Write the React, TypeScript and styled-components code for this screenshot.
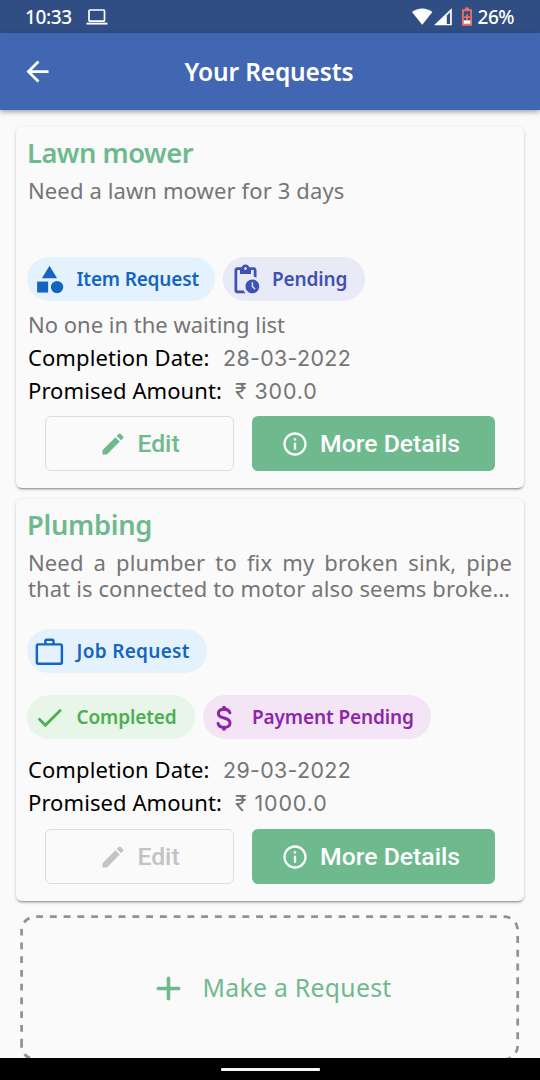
import React from 'react';
import type { ComponentType } from 'react';
import styled, { createGlobalStyle } from 'styled-components';
import {
  MdArrowBack,
  MdCategory,
  MdDone,
  MdEdit,
  MdInfoOutline,
  MdPendingActions,
} from 'react-icons/md';

const green = '#6fb98f';

const GlobalStyle = createGlobalStyle`
  *, *::before, *::after { box-sizing: border-box; }
  body { margin: 0; background: #fafafa; }
  button { font: inherit; margin: 0; }
  svg { display: block; flex: none; }
`;

const Screen = styled.div`
  width: 540px;
  height: 1080px;
  display: flex;
  flex-direction: column;
  overflow: hidden;
  background: #fafafa;
  color: #757575;
  font-family: 'Noto Sans', sans-serif;
`;

const StatusBar = styled.div`
  flex: none;
  height: 33px;
  padding: 0 26px 0 25px;
  display: flex;
  align-items: center;
  background: #304e84;
  color: #fff;
  font-size: 19px;
  font-weight: 500;
  line-height: 33px;
`;

const StatusText = styled.span<{ $spacing: number }>`
  padding-top: 1px;
  letter-spacing: ${(p) => p.$spacing}px;
`;

const StatusIcons = styled.div`
  display: flex;
  align-items: center;
  margin-left: auto;
  margin-right: 6px;
`;

const LaptopSlot = styled.div`
  margin-left: 14px;
`;

const AppBar = styled.header`
  flex: none;
  position: relative;
  height: 77px;
  padding: 0 21px;
  display: grid;
  grid-template-columns: 60px 1fr 60px;
  align-items: center;
  background: #4267b2;
  color: #fff;
  box-shadow: 0 2px 5px rgba(0, 0, 0, 0.35);
`;

const AppTitle = styled.h1`
  margin: 0 2px 0 0;
  text-align: center;
  font-size: 24.5px;
  font-weight: 600;
  line-height: 34px;
  letter-spacing: -0.15px;
`;

const Content = styled.main`
  flex: 1;
  min-height: 0;
  overflow: hidden;
  padding: 17px 16px 0;
  display: flex;
  flex-direction: column;
`;

const Card = styled.article`
  flex: none;
  padding: 9px 12px 17px;
  margin-bottom: 11px;
  border-radius: 6px;
  background: #fafafa;
  box-shadow:
    0 3px 1px -2px rgba(0, 0, 0, 0.2),
    0 2px 2px rgba(0, 0, 0, 0.14),
    0 1px 4px rgba(0, 0, 0, 0.12);
`;

const CardTitle = styled.h2<{ $spacing: number }>`
  margin: 0 0 0 -1px;
  color: ${green};
  font-size: 27.3px;
  font-weight: 600;
  line-height: 34px;
  letter-spacing: ${(p) => p.$spacing}px;
`;

const Description = styled.p`
  margin: 7px 0 28px;
  height: 52px;
  font-size: 22px;
  line-height: 26px;
  letter-spacing: 0.12px;
  text-align: justify;
`;

const Chips = styled.div`
  display: flex;
  margin-left: -1px;
  gap: 7.5px;

  & + & {
    margin-top: 22px;
  }
`;

const tones = {
  blue: { bg: '#e3f2fd', fg: '#1565c0' },
  indigo: { bg: '#e8eaf6', fg: '#3f51b5' },
  green: { bg: '#e8f5e9', fg: '#4caf50' },
  purple: { bg: '#f3e5f5', fg: '#8e24aa' },
};

const ChipBox = styled.div<{ $tone: keyof typeof tones; $width: number }>`
  width: ${(p) => p.$width}px;
  height: 44px;
  padding-left: 6px;
  display: flex;
  align-items: center;
  gap: 10.5px;
  border-radius: 22px;
  background: ${(p) => tones[p.$tone].bg};
  color: ${(p) => tones[p.$tone].fg};
`;

const ChipLabel = styled.span<{ $spacing: number }>`
  font-size: 19px;
  font-weight: 600;
  line-height: 26px;
  letter-spacing: ${(p) => p.$spacing}px;
  white-space: nowrap;
`;

const Info = styled.div<{ $top: number; $bottom: number }>`
  margin: ${(p) => p.$top}px 0 ${(p) => p.$bottom}px;
  font-size: 22px;
  line-height: 33px;
`;

const InfoRow = styled.div`
  display: flex;
  height: 33px;
  align-items: baseline;
  white-space: nowrap;
`;

const InfoLabel = styled.span<{ $width: number }>`
  width: ${(p) => p.$width}px;
  color: #000;
  letter-spacing: 0.08px;
`;

const InfoValue = styled.span<{ $spacing: number }>`
  font-family: Inter, 'Noto Sans', sans-serif;
  font-size: 21.4px;
  letter-spacing: ${(p) => p.$spacing}px;
`;

const Actions = styled.div`
  display: flex;
  gap: 18px;
  padding: 0 17px;
`;

const ActionButton = styled.button<{ $filled?: boolean }>`
  width: ${(p) => (p.$filled ? 243 : 189)}px;
  height: 55px;
  padding: ${(p) => (p.$filled ? '0 6px 0 0' : '0')};
  display: flex;
  align-items: center;
  justify-content: center;
  gap: ${(p) => (p.$filled ? 11 : 10)}px;
  border: ${(p) => (p.$filled ? '0' : '1.4px solid #dcdcdc')};
  border-radius: 6px;
  background: ${(p) => (p.$filled ? green : 'transparent')};
  color: ${(p) => (p.$filled ? '#fff' : green)};
  font-family: Roboto, sans-serif;
  font-size: 24.75px;
  font-weight: 500;

  &:disabled {
    color: #c3c3c3;
  }
`;

const NewRequest = styled.button`
  flex: none;
  position: relative;
  height: 146px;
  margin: 3px 4px 0;
  padding: 0;
  display: flex;
  align-items: center;
  justify-content: center;
  gap: 13px;
  border: 0;
  background: none;
  color: ${green};
  font-size: 24.75px;
  line-height: 34px;
`;

const NewRequestLabel = styled.span`
  letter-spacing: 0.3px;
`;

const DashedOutline = styled.svg`
  position: absolute;
  left: 0;
  top: 0;
  overflow: visible;
`;

const NavigationBar = styled.div`
  flex: none;
  height: 22px;
  display: flex;
  align-items: center;
  justify-content: center;
  background: #000;
`;

const HomeHandle = styled.div`
  width: 99px;
  height: 3px;
  border-radius: 1px;
  background: #f5f5f5;
`;

type IconProps = { size?: number };

function BriefcaseIcon({ size = 24 }: IconProps) {
  return (
    <svg width={size} height={size} viewBox="0 0 24 24" fill="none" stroke="currentColor" strokeWidth="1.75">
      <rect x="2.8" y="6.8" width="18.2" height="14.1" rx="1.1" />
      <path d="M9 6.800V4.400q0-1 1-1h3.900q1 0 1 1V6.800" />
    </svg>
  );
}

function DollarIcon({ size = 24 }: IconProps) {
  return (
    <svg width={size} height={size} viewBox="0 0 24 24" fill="none" stroke="currentColor" strokeLinecap="round">
      <path
        d="M15.200 8.600C14.700 6.900 13 5.900 10.900 5.900 8.500 5.900 6.800 7.200 6.800 9c0 2 1.800 2.700 4.200 3.300 2.600.7 4.300 1.600 4.300 3.700 0 2-1.900 3.200-4.300 3.200-2.400 0-4-1.100-4.400-2.900"
        strokeWidth="2.2"
      />
      <path d="M10.900 4.800v1M10.900 19.300v1" strokeWidth="2.700" />
    </svg>
  );
}

function Chip({ icon: Icon, label, tone, width, spacing = -0.12 }: {
  icon: ComponentType<IconProps>;
  label: string;
  tone: keyof typeof tones;
  width: number;
  spacing?: number;
}) {
  return (
    <ChipBox $tone={tone} $width={width}>
      <Icon size={33} />
      <ChipLabel $spacing={spacing}>{label}</ChipLabel>
    </ChipBox>
  );
}

function Details({ date, amount }: { date: string; amount: string }) {
  return (
    <>
      <InfoRow>
        <InfoLabel $width={195}>Completion Date:</InfoLabel>
        <InfoValue $spacing={0.35}>{date}</InfoValue>
      </InfoRow>
      <InfoRow>
        <InfoLabel $width={207}>Promised Amount:</InfoLabel>
        <InfoValue $spacing={0.9}>₹ {amount}</InfoValue>
      </InfoRow>
    </>
  );
}

function CardActions({ editable }: { editable: boolean }) {
  return (
    <Actions>
      <ActionButton disabled={!editable}>
        <MdEdit size={28} />
        Edit
      </ActionButton>
      <ActionButton $filled>
        <MdInfoOutline size={28} />
        More Details
      </ActionButton>
    </Actions>
  );
}

export default function App() {
  return (
    <Screen>
      <GlobalStyle />
      <StatusBar>
        <StatusText $spacing={-0.4}>10:33</StatusText>
        <LaptopSlot>
          <svg width="22" height="16" viewBox="0 0 22 16" fill="none" stroke="#fff">
            <rect x="3" y="1" width="15.5" height="11.2" rx="1" strokeWidth="1.7" />
            <path d="M0.5 14.6h21" strokeWidth="1.9" />
          </svg>
        </LaptopSlot>
        <StatusIcons>
          <svg width="60" height="20" viewBox="0 0 60 20">
            <path d="M0 5C5.800.2 14.600.2 20.400 5L10.200 17.800z" fill="#fff" />
            <path d="M22 18.200L39.800 1.200v17z" fill="#fff" />
            <path d="M34.800 8.400l3.300-3.200v11.700h-3.300z" fill="#304e84" />
            <path d="M53 .600h4v1.700h3v16.400H50V2.300h3z" fill="#ec7063" />
            <path d="M51.800 4.200h6.400v9.200h-6.400z" fill="#304e84" />
            <path d="M51.800 13.400h6.400v3.300h-6.400z" fill="#fff" />
            <path d="M54.100 7.200h1.900v2h2v1.800h-2v2h-1.900v-2h-2V9.200h2z" fill="#ec7063" />
          </svg>
        </StatusIcons>
        <StatusText $spacing={-0.5}>26%</StatusText>
      </StatusBar>

      <AppBar>
        <MdArrowBack size={33} />
        <AppTitle>Your Requests</AppTitle>
      </AppBar>

      <Content>
        <Card>
          <CardTitle $spacing={-0.5}>Lawn mower</CardTitle>
          <Description>Need a lawn mower for 3 days</Description>
          <Chips>
            <Chip icon={MdCategory} label="Item Request" tone="blue" width={188} spacing={-0.18} />
            <Chip icon={MdPendingActions} label="Pending" tone="indigo" width={142} />
          </Chips>
          <Info $top={7} $bottom={9}>
            <InfoRow>No one in the waiting list</InfoRow>
            <Details date="28-03-2022" amount="300.0" />
          </Info>
          <CardActions editable />
        </Card>

        <Card>
          <CardTitle $spacing={-0.3}>Plumbing</CardTitle>
          <Description>
            Need a plumber to fix my broken sink, pipe that is connected to motor also seems broke…
          </Description>
          <Chips>
            <Chip icon={BriefcaseIcon} label="Job Request" tone="blue" width={180} spacing={0.3} />
          </Chips>
          <Chips>
            <Chip icon={MdDone} label="Completed" tone="green" width={168} />
            <Chip icon={DollarIcon} label="Payment Pending" tone="purple" width={228} />
          </Chips>
          <Info $top={14} $bottom={10}>
            <Details date="29-03-2022" amount="1000.0" />
          </Info>
          <CardActions editable={false} />
        </Card>

        <NewRequest>
          <DashedOutline width="500" height="146" viewBox="0 0 500 146" fill="none">
            <path
              d="M1.6 130.6V15.35A13.75 13.75 0 0 1 15.35 1.6H483.95A13.75 13.75 0 0 1 497.7 15.35V130.6A13.75 13.75 0 0 1 483.95 144.35H15.35A13.75 13.75 0 0 1 1.6 130.6Z"
              stroke="#929292"
              strokeWidth="2.75"
              strokeDasharray="6.875 6.875"
            />
          </DashedOutline>
          <svg width="41" height="41" viewBox="0 0 24 24" stroke={green} strokeWidth="2.1" strokeLinecap="round">
            <path d="M6 12h12M12 6v12" />
          </svg>
          <NewRequestLabel>Make a Request</NewRequestLabel>
        </NewRequest>
      </Content>

      <NavigationBar>
        <HomeHandle />
      </NavigationBar>
    </Screen>
  );
}
